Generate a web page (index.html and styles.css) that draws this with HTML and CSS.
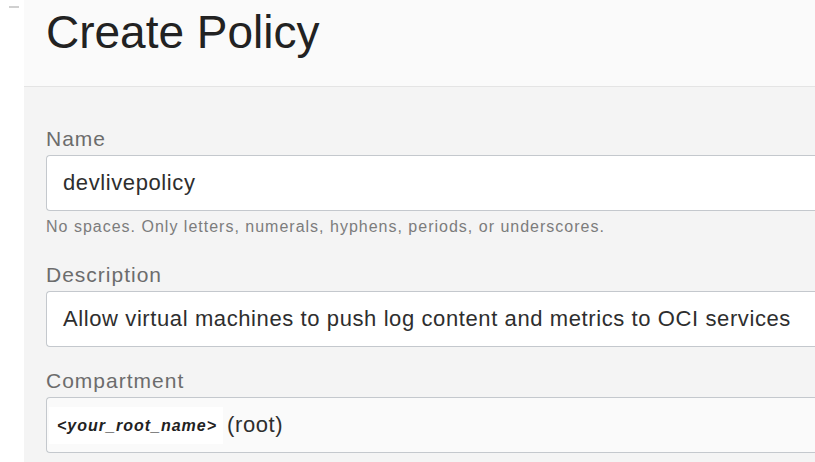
FILE: index.html
```html
<!DOCTYPE html>
<html>
<head>
<meta charset="utf-8">
<link rel="stylesheet" href="styles.css">
</head>
<body>
<div class="page">
  <div class="gutter"><span class="dash"></span></div>
  <div class="panel">
    <header class="head">
      <h1 class="title">Create Policy</h1>
    </header>
    <main class="body">
      <div class="field">
        <label class="label">Name</label>
        <div class="input">devlivepolicy</div>
        <div class="hint">No spaces. Only letters, numerals, hyphens, periods, or underscores.</div>
      </div>
      <div class="field">
        <label class="label">Description</label>
        <div class="input">Allow virtual machines to push log content and metrics to OCI services</div>
      </div>
      <div class="field">
        <label class="label">Compartment</label>
        <div class="input select"><span class="ph">&lt;your_root_name&gt;</span><span class="root">(root)</span></div>
      </div>
    </main>
  </div>
</div>
</body>
</html>
```

FILE: styles.css
```css
* { box-sizing: border-box; }
html, body { margin: 0; padding: 0; background: #fff; }
body {
  font-family: "Liberation Sans", Arial, sans-serif;
  width: 815px;
  height: 462px;
  overflow: hidden;
}
.page {
  display: flex;
  height: 462px;
}
.gutter {
  width: 24px;
  flex: none;
  padding: 6px 0 0 9px;
}
.dash {
  display: block;
  width: 10px;
  height: 2px;
  background: #d0d0d0;
}
.panel {
  flex: 1;
  display: flex;
  flex-direction: column;
  min-width: 0;
  margin-right: -40px;
}
.head {
  flex: none;
  background: #fafafa;
  height: 87px;
  border-bottom: 1px solid #e4e4e4;
  padding: 6px 0 0 22px;
}
.title {
  margin: 0;
  font-weight: normal;
  font-size: 46px;
  line-height: 52px;
  color: #222;
}
.body {
  flex: 1 0 auto;
  background: #f4f4f4;
  padding: 40px 0 0 22px;
}
.field { margin-bottom: 22px; }
.field:first-child { margin-bottom: 27px; }
.label {
  display: block;
  font-size: 21px;
  line-height: 24px;
  letter-spacing: 1px;
  color: #6c6c6c;
  margin-bottom: 4px;
}
.input {
  height: 56px;
  background: #fff;
  border: 1px solid #c4c8cd;
  border-right: none;
  border-radius: 4px 0 0 4px;
  padding: 0 0 0 16px;
  display: flex;
  align-items: center;
  font-size: 22px;
  letter-spacing: 0.6px;
  color: #2e2e2e;
  white-space: nowrap;
}
.hint {
  font-size: 16px;
  line-height: 18px;
  letter-spacing: 1px;
  color: #7c7c7c;
  margin-top: 7px;
}
.select {
  background: #fafafa;
  padding-left: 2px;
}
.ph {
  background: #fff;
  font-size: 16px;
  font-weight: bold;
  font-style: italic;
  letter-spacing: 1px;
  color: #222;
  padding: 10px 6px 10px 8px;
  line-height: 17px;
}
.root {
  margin-left: 4px;
}
```
